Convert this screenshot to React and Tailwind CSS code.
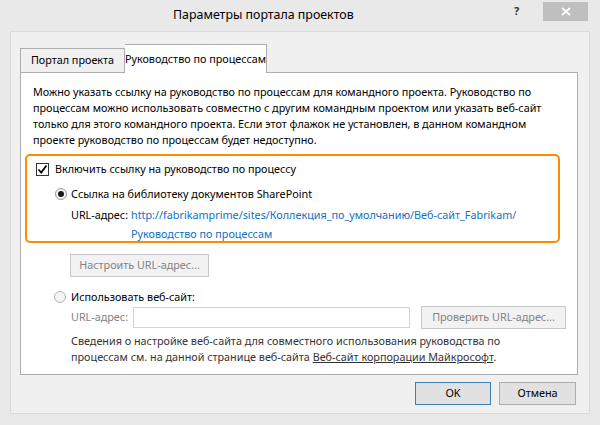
export default function App() {
  const font = { fontFamily: '"Noto Sans","DejaVu Sans",sans-serif' };
  return (
    <div className="w-[600px] h-[425px] bg-[#e9e9e9] flex flex-col text-[10.8px] text-[#000] whitespace-nowrap" style={font}>
      <div className="h-[31px] relative shrink-0">
        <div className="absolute left-[173px] top-[6px] text-[12.4px] text-[#000] leading-[18px]">Параметры портала проектов</div>
        <div className="absolute left-[514px] top-[3px] text-[11px] font-bold text-[#333]">?</div>
        <div className="absolute left-[543px] top-[2px] w-[45px] h-[19px] bg-[#bfbfbf] flex items-center justify-center">
          <svg width="10" height="9" viewBox="0 0 10 9">
            <path d="M1 1 L9 8 M9 1 L1 8" stroke="#fff" strokeWidth="1.8" />
          </svg>
        </div>
      </div>
      <div className="mx-[10px] h-[383px] bg-[#f0f0f0] border border-[#dadada] flex flex-col">
        <div className="pl-[9px] pt-[12px] flex items-end">
          <div className="w-[105px] h-[24px] border border-[#adadad] border-b-0 bg-[#f0f0f0] flex items-center justify-center">
            Портал проекта
          </div>
          <div className="w-[142px] h-[29px] border border-[#adadad] border-b-0 border-l-0 bg-white flex items-center justify-center -mb-px relative z-10">
            Руководство по процессам
          </div>
        </div>
        <div className="ml-[9px] w-[558px] h-[303px] bg-white border border-[#adadad] flex flex-col">
          <div className="pl-[12px] pt-[11px] leading-[16px]">
            Можно указать ссылку на руководство по процессам для командного проекта. Руководство по
            <br />
            процессам можно использовать совместно с другим командным проектом или указать веб-сайт
            <br />
            только для этого командного проекта. Если этот флажок не установлен, в данном командном
            <br />
            проекте руководство по процессам будет недоступно.
          </div>
          <div className="ml-[4px] mt-[6px] w-[535px] h-[89px] border-2 border-[#ff8c00] rounded-[5px] flex flex-col pl-[9px] pt-[5px]">
            <div className="flex items-center h-[16px] gap-[6px]">
              <div className="w-[13px] h-[13px] border border-[#333] bg-white flex items-center justify-center">
                <svg width="11" height="11" viewBox="0 0 11 11">
                  <path d="M1.5 5.5 L4.2 8.5 L9.5 1.5" stroke="#000" strokeWidth="1.8" fill="none" />
                </svg>
              </div>
              <span>Включить ссылку на руководство по процессу</span>
            </div>
            <div className="flex items-center h-[16px] gap-[4px] mt-[9px] pl-[19px]">
              <div className="w-[12px] h-[12px] rounded-full border border-[#9a9a9a] bg-[#f4f4f4] flex items-center justify-center">
                <div className="w-[6px] h-[6px] rounded-full bg-[#1a1a1a]"></div>
              </div>
              <span>Ссылка на библиотеку документов SharePoint</span>
            </div>
            <div className="flex pl-[35px] mt-[3px] leading-[19px]">
              <span className="w-[60px] shrink-0">URL-адрес:</span>
              <span className="text-[#0f6fc6]">
                http://fabrikamprime/sites/Коллекция_по_умолчанию/Веб-сайт_Fabrikam/
                <br />
                Руководство по процессам
              </span>
            </div>
          </div>
          <div className="ml-[49px] mt-[11px] w-[139px] h-[23px] border border-[#c8c8c8] bg-[#f2f2f2] text-[#838383] flex items-center justify-center">
            Настроить URL-адрес...
          </div>
          <div className="flex items-center h-[16px] gap-[5px] mt-[12px] pl-[33px]">
            <div className="w-[12px] h-[12px] rounded-full border border-[#b4b4b4] bg-[#f4f4f4]"></div>
            <span>Использовать веб-сайт:</span>
          </div>
          <div className="flex items-center pl-[50px] mt-[1px] h-[22px]">
            <span className="w-[62px] text-[#838383]">URL-адрес:</span>
            <div className="w-[277px] h-[21px] border border-[#d4d4d4] bg-white"></div>
            <div className="ml-[11px] w-[145px] h-[23px] border border-[#c8c8c8] bg-[#f2f2f2] text-[#838383] flex items-center justify-center">
              Проверить URL-адрес...
            </div>
          </div>
          <div className="pl-[50px] mt-[5px] leading-[16px] text-[#333]">
            Сведения о настройке веб-сайта для совместного использования руководства по
            <br />
            процессам см. на данной странице веб-сайта <span className="underline">Веб-сайт корпорации Майкрософт</span>.
          </div>
        </div>
        <div className="flex justify-end gap-[8px] pr-[13px] mt-[7px]">
          <div className="w-[76px] h-[23px] border border-[#3c7fb1] bg-[#e1e1e1] flex items-center justify-center">OK</div>
          <div className="w-[77px] h-[23px] border border-[#adadad] bg-[#e1e1e1] flex items-center justify-center">Отмена</div>
        </div>
      </div>
    </div>
  );
}
